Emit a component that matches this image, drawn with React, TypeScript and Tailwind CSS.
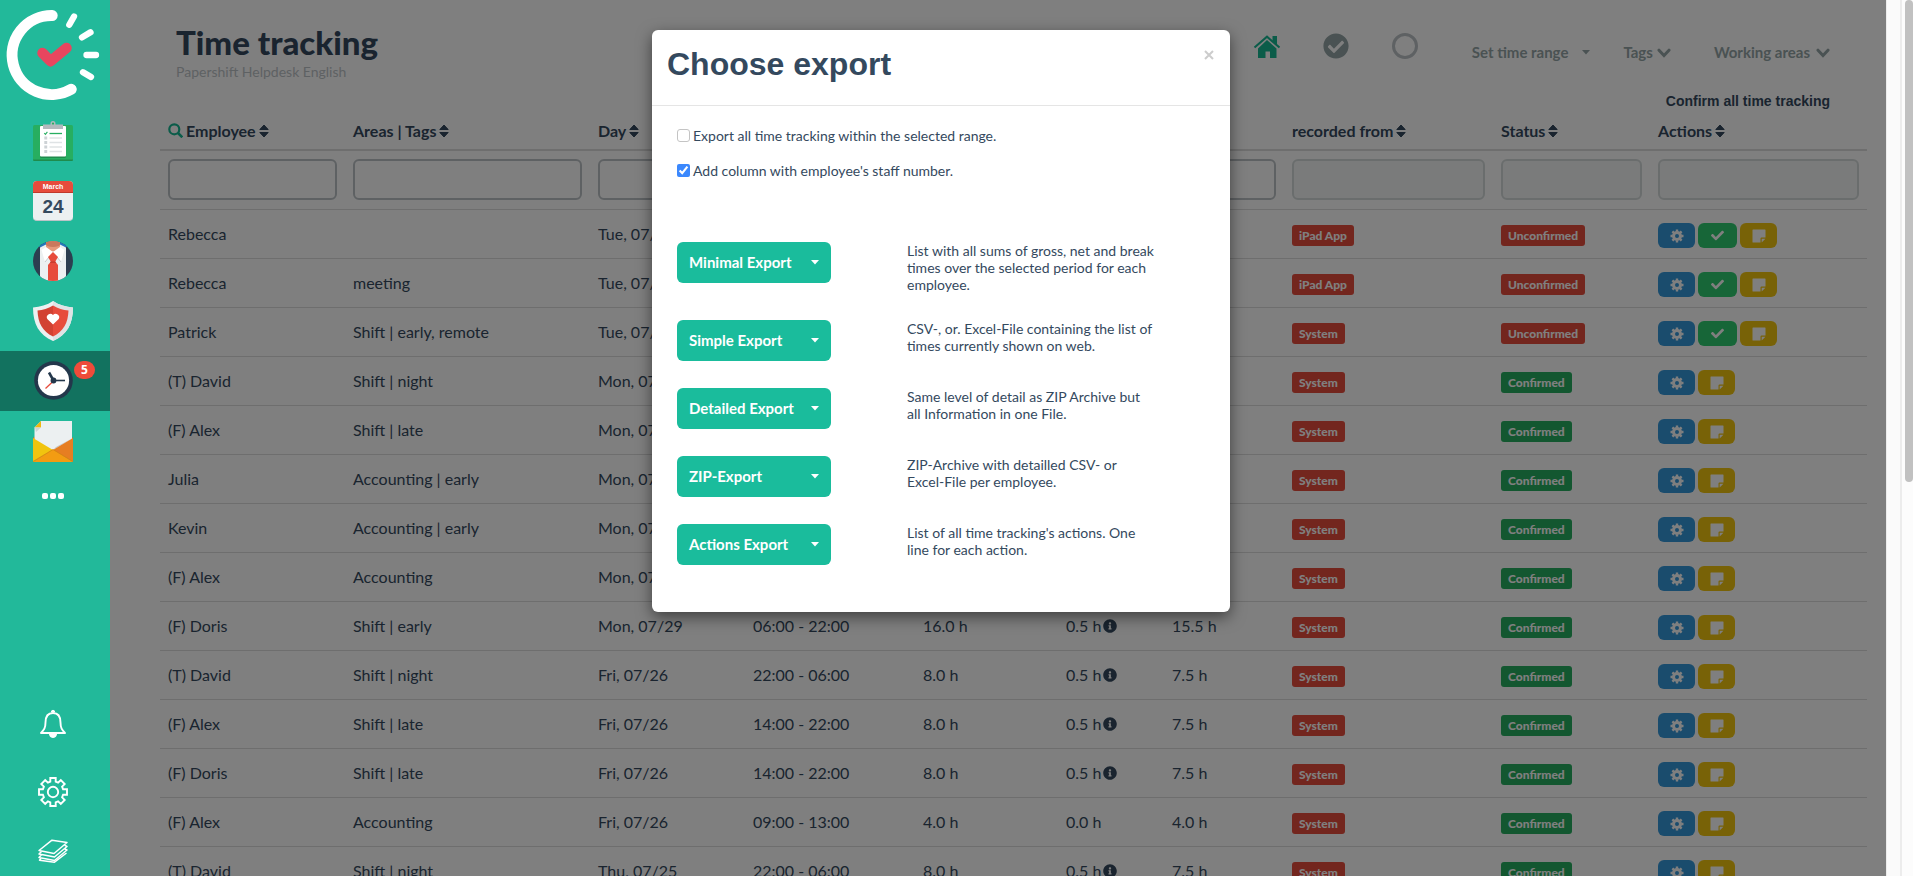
import React from 'react';
import { FaCheck, FaCheckCircle, FaInfoCircle } from 'react-icons/fa';

type Entry = {
  name: string;
  areas: string;
  day: string;
  time: string;
  gross: string;
  pause: string;
  net: string;
  source: string;
  confirmed: boolean;
};

const entries: Entry[] = [
  { name: 'Rebecca', areas: '', day: 'Tue, 07/30', time: '08:00 - 12:00', gross: '4.0 h', pause: '0.0 h', net: '4.0 h', source: 'iPad App', confirmed: false },
  { name: 'Rebecca', areas: 'meeting', day: 'Tue, 07/30', time: '13:00 - 17:00', gross: '4.0 h', pause: '0.0 h', net: '4.0 h', source: 'iPad App', confirmed: false },
  { name: 'Patrick', areas: 'Shift | early, remote', day: 'Tue, 07/30', time: '06:00 - 14:00', gross: '8.0 h', pause: '0.5 h', net: '7.5 h', source: 'System', confirmed: false },
  { name: '(T) David', areas: 'Shift | night', day: 'Mon, 07/29', time: '22:00 - 06:00', gross: '8.0 h', pause: '0.5 h', net: '7.5 h', source: 'System', confirmed: true },
  { name: '(F) Alex', areas: 'Shift | late', day: 'Mon, 07/29', time: '14:00 - 22:00', gross: '8.0 h', pause: '0.5 h', net: '7.5 h', source: 'System', confirmed: true },
  { name: 'Julia', areas: 'Accounting | early', day: 'Mon, 07/29', time: '06:00 - 14:00', gross: '8.0 h', pause: '0.5 h', net: '7.5 h', source: 'System', confirmed: true },
  { name: 'Kevin', areas: 'Accounting | early', day: 'Mon, 07/29', time: '06:00 - 14:00', gross: '8.0 h', pause: '0.5 h', net: '7.5 h', source: 'System', confirmed: true },
  { name: '(F) Alex', areas: 'Accounting', day: 'Mon, 07/29', time: '09:00 - 13:00', gross: '4.0 h', pause: '0.0 h', net: '4.0 h', source: 'System', confirmed: true },
  { name: '(F) Doris', areas: 'Shift | early', day: 'Mon, 07/29', time: '06:00 - 22:00', gross: '16.0 h', pause: '0.5 h', net: '15.5 h', source: 'System', confirmed: true },
  { name: '(T) David', areas: 'Shift | night', day: 'Fri, 07/26', time: '22:00 - 06:00', gross: '8.0 h', pause: '0.5 h', net: '7.5 h', source: 'System', confirmed: true },
  { name: '(F) Alex', areas: 'Shift | late', day: 'Fri, 07/26', time: '14:00 - 22:00', gross: '8.0 h', pause: '0.5 h', net: '7.5 h', source: 'System', confirmed: true },
  { name: '(F) Doris', areas: 'Shift | late', day: 'Fri, 07/26', time: '14:00 - 22:00', gross: '8.0 h', pause: '0.5 h', net: '7.5 h', source: 'System', confirmed: true },
  { name: '(F) Alex', areas: 'Accounting', day: 'Fri, 07/26', time: '09:00 - 13:00', gross: '4.0 h', pause: '0.0 h', net: '4.0 h', source: 'System', confirmed: true },
  { name: '(T) David', areas: 'Shift | night', day: 'Thu, 07/25', time: '22:00 - 06:00', gross: '8.0 h', pause: '0.5 h', net: '7.5 h', source: 'System', confirmed: true },
];

const columns = [
  { label: 'Employee', width: 'w-[185px]', disabled: false },
  { label: 'Areas | Tags', width: 'w-[245px]', disabled: false },
  { label: 'Day', width: 'w-[155px]', disabled: false },
  { label: 'Time', width: 'w-[170px]', disabled: false },
  { label: 'Gross', width: 'w-[143px]', disabled: false },
  { label: 'Break', width: 'w-[106px]', disabled: false },
  { label: 'Net', width: 'w-[120px]', disabled: false },
  { label: 'recorded from', width: 'w-[209px]', disabled: true },
  { label: 'Status', width: 'w-[157px]', disabled: true },
  { label: 'Actions', width: 'w-auto', disabled: true },
];

const exportsList = [
  { label: 'Minimal Export', text: 'List with all sums of gross, net and break times over the selected period for each employee.' },
  { label: 'Simple Export', text: 'CSV-, or. Excel-File containing the list of times currently shown on web.' },
  { label: 'Detailed Export', text: 'Same level of detail as ZIP Archive but all Information in one File.' },
  { label: 'ZIP-Export', text: 'ZIP-Archive with detailled CSV- or Excel-File per employee.' },
  { label: 'Actions Export', text: "List of all time tracking's actions. One line for each action." },
];

function Logo() {
  return (
    <svg width="110" height="110" viewBox="0 0 110 110" fill="none" strokeLinecap="round" aria-hidden="true">
      <path d="M52.200 15.500A39.500 39.500 0 1 0 71.200 89.300" stroke="#fff" strokeWidth="11" />
      <path d="M42.500 53L50.500 61.200L66.500 48" stroke="#e8465f" strokeWidth="10.500" strokeLinejoin="round" />
      <path d="M74 16.500L69.300 24.700M90.500 32.300L82 37.400M86.500 55H96M83 72.200L91 77" stroke="#fff" strokeWidth="6.300" />
    </svg>
  );
}

function ClipboardIcon() {
  return (
    <svg width="40" height="40" viewBox="0 0 40 40" aria-hidden="true">
      <rect y="4" width="40" height="36" rx="1.500" fill="#27ae60" />
      <path d="M0 38.500h40a1.500 1.500 0 0 1-1.500 1.500h-37A1.500 1.500 0 0 1 0 38.500z" fill="#1f8b4d" />
      <rect x="7" y="6" width="26" height="31" rx="1.500" fill="#1f8b4d" />
      <rect x="7" y="5" width="26" height="30.500" rx="1" fill="#fff" />
      <path d="M10 3.500h7.500V2.500a2.500 2.500 0 0 1 5 0v1H30V8H10z" fill="#b3b9bd" />
      <circle cx="20" cy="2.600" r="1.100" fill="#27ae60" />
      <path d="M11.200 12l1.200 1.300 2-2.400" stroke="#27ae60" strokeWidth="1.100" fill="none" />
      <path d="M16.500 12.500H29" stroke="#27ae60" strokeWidth="1.300" />
      <path d="M16.500 17H29M16.500 21.500H29M16.500 26H29M16.500 30.500H29" stroke="#dfe3e5" strokeWidth="1.300" />
      <path d="M11.300 17h2.900M11.300 21.500h2.900M11.300 26h2.900M11.300 30.500h2.900" stroke="#cdd2d5" strokeWidth="2.800" />
    </svg>
  );
}

function CalendarIcon() {
  return (
    <span className="flex h-10 w-10 flex-col overflow-hidden rounded-sm border-b border-[#bdc3c7] bg-[#ecf0f1] text-center">
      <span className="h-3 border-b border-[#c0392b] bg-[#e74c3c] font-['Liberation_Sans',sans-serif] text-[7px] leading-[11px] font-bold text-white">March</span>
      <span className="font-['Liberation_Sans',sans-serif] text-[19px] leading-[27px] font-bold text-[#34495e]">24</span>
    </span>
  );
}

function SuitIcon() {
  return (
    <svg width="40" height="40" viewBox="0 0 40 40" aria-hidden="true">
      <clipPath id="suit-clip"><circle cx="20" cy="20" r="20" /></clipPath>
      <g clipPath="url(#suit-clip)">
        <rect width="40" height="40" fill="#2c3e50" />
        <path d="M5 0h30v6H5z" fill="#2477bd" />
        <path d="M7 6.500L14 3h12l7 3.500V40H7z" fill="#ecf0f1" />
        <path d="M13 0h14v6.500a7 4 0 0 1-14 0z" fill="#e59a7c" />
        <path d="M13 0h14v3.500a7 2.500 0 0 1-14 0z" fill="#c9795d" />
        <path d="M13 6L20 11 12 21 8.500 9zM27 6L20 11 28 21 31.500 9z" fill="#fff" />
        <path d="M12 21l4-5M28 21l-4-5" stroke="#c5cbce" strokeWidth="1" />
        <path d="M20 11l5 5-3 5h-4l-3-5z" fill="#e74c3c" />
        <path d="M17.500 21h5l2.500 3v16H15V24z" fill="#e74c3c" />
        <path d="M17.500 20.500h5l.7 1.300h-6.400z" fill="#c0392b" />
      </g>
    </svg>
  );
}

function ShieldIcon() {
  return (
    <svg width="40" height="40" viewBox="0 0 40 40" aria-hidden="true">
      <path d="M20 0C14 4 7 6 0 6.500C0 23 6 34 20 40C34 34 40 23 40 6.500C33 6 26 4 20 0z" fill="#ecf0f1" />
      <path d="M20 0C26 4 33 6 40 6.500C40 23 34 34 20 40z" fill="#dfe3e5" />
      <path d="M20 4.500C15 7.500 10 9 4.500 9.500C5 22 9.500 30.500 20 35.500z" fill="#d24233" />
      <path d="M20 4.500C25 7.500 30 9 35.500 9.500C35 22 30.500 30.500 20 35.500z" fill="#e74c3c" />
      <path d="M20 23.500L14.300 18a3.500 3.500 0 0 1 5.700-4 3.500 3.500 0 0 1 5.700 4z" fill="#fff" />
    </svg>
  );
}

function ClockIcon() {
  return (
    <svg width="40" height="40" viewBox="0 0 40 40" aria-hidden="true">
      <circle cx="20.500" cy="19.500" r="19.300" fill="#23374b" />
      <circle cx="20.500" cy="19.500" r="15.600" fill="#fff" />
      <path d="M20.500 20L12.500 27.500" stroke="#e74c3c" strokeWidth="1.300" />
      <path d="M20.500 19.500H32" stroke="#23374b" strokeWidth="1.600" />
      <path d="M20.500 19.500L16 11.500" stroke="#23374b" strokeWidth="2.600" />
      <circle cx="20.500" cy="19.500" r="2.900" fill="#23374b" />
    </svg>
  );
}

function MailIcon() {
  return (
    <svg width="40" height="41" viewBox="0 0 40 41" aria-hidden="true">
      <path d="M0 17l3-2h34l3 2v8H0z" fill="#d56f12" />
      <path d="M1.500 6.500L8 0h31v29H1.500z" fill="#ecf0f1" />
      <path d="M1.500 6.500h6.500V0z" fill="#f1b80f" />
      <path d="M2 6.500h6L3 11z" fill="#cfd4d6" />
      <path d="M40 17L20 29l3-3z" fill="#bfc5c8" />
      <path d="M0 17L20 29 0 41z" fill="#f1c40f" />
      <path d="M40 17L20 29 40 41z" fill="#e67e22" />
      <path d="M0 41L20 28.500 40 41z" fill="#f39c12" />
      <path d="M0 40.500L20 28.500 40 40.500" stroke="#d9820f" strokeWidth=".8" fill="none" />
    </svg>
  );
}

function BellIcon() {
  return (
    <svg width="30" height="30" viewBox="0 0 30 30" fill="none" stroke="#fff" strokeWidth="1.900" strokeLinejoin="round" aria-hidden="true">
      <path d="M3 24C6 21 7.500 19 7.500 13.500C7.500 7 10.500 4 15 4S22.500 7 22.500 13.500C22.500 19 24 21 27 24z" />
      <path d="M13.300 3a1.700 1.700 0 0 1 3.400 0z" fill="#fff" strokeWidth="1" />
      <path d="M11.500 25a3.500 3.500 0 0 0 7 0z" fill="#fff" strokeWidth="1" />
    </svg>
  );
}

function GearOutlineIcon() {
  return (
    <svg width="30" height="30" viewBox="0 0 30 30" fill="none" stroke="#fff" strokeWidth="1.900" aria-hidden="true">
      <path d="M12.300 1h5.400v3.700l2.400 1 2.700-2.600 3.900 3.900-2.600 2.700 1 2.600H29v5.400h-3.900l-1 2.600 2.600 2.700-3.900 3.900-2.700-2.600-2.400 1V29h-5.400v-3.700l-2.400-1-2.700 2.600-3.900-3.900 2.600-2.700-1-2.600H1v-5.400h3.900l1-2.600L3.300 7l3.900-3.900 2.700 2.600 2.400-1z" />
      <circle cx="15" cy="15" r="5.200" />
    </svg>
  );
}

function LayersIcon() {
  return (
    <svg width="30" height="24" viewBox="0 0 30 24" fill="none" stroke="#fff" strokeWidth="1.500" strokeLinejoin="round" aria-hidden="true">
      <path d="M14 1.200L29 3.500 16 14.500 1 11.500z" />
      <path d="M3.500 12.500L1 15l15.500 3L29 7.500l-2.500-1.300M3.500 15.800L1 18.500l15.500 3L29 11l-2.500-1.200" />
      <path d="M3 19.200L1.500 21.200l15 2L28.500 14" />
    </svg>
  );
}

function HomeIcon() {
  return (
    <svg width="28" height="24" viewBox="0 0 28 24" aria-hidden="true">
      <path d="M14 6L23.500 14.500V24H17v-6.500h-4.500V24H5V14.500z" fill="#16b893" />
      <path d="M1.500 13.500L14 2.700 26.500 13.500" stroke="#16b893" strokeWidth="2.100" fill="none" />
      <path d="M19.500 2H24v9l-4.500-4z" fill="#16b893" />
    </svg>
  );
}

function SearchIcon() {
  return (
    <svg width="15" height="15" viewBox="0 0 15 15" fill="none" stroke="#16b893" aria-hidden="true">
      <circle cx="6.300" cy="6.300" r="5" strokeWidth="2.200" />
      <path d="M10 10l4.300 4.300" strokeWidth="2.600" />
    </svg>
  );
}

function SortIcon() {
  return (
    <svg width="10" height="14" viewBox="0 0 10 14" fill="#34495e" stroke="#34495e" strokeWidth="1" strokeLinejoin="round" aria-hidden="true">
      <path d="M5 1L9.200 5.500H.8zM5 13L.8 8.500h8.400z" />
    </svg>
  );
}

function Chevron() {
  return (
    <svg width="14" height="10" viewBox="0 0 14 10" fill="none" stroke="#95a5a6" strokeWidth="3" strokeLinecap="round" aria-hidden="true">
      <path d="M2 2.200L7 7.500 12 2.200" />
    </svg>
  );
}

function Caret({ className }: { className: string }) {
  return (
    <svg width="8" height="5" viewBox="0 0 8 5" className={className} aria-hidden="true">
      <path d="M0 0h8L4 4.500z" />
    </svg>
  );
}

function CogIcon() {
  return (
    <svg width="14" height="14" viewBox="0 0 14 14" fill="none" stroke="#fff" aria-hidden="true">
      <circle cx="7" cy="7" r="3.500" strokeWidth="3" />
      <path d="M7 .5v2M7 11.500v2M.5 7h2M11.500 7h2M2.400 2.400l1.500 1.500M10.100 10.100l1.500 1.500M11.600 2.400l-1.500 1.500M3.900 10.100l-1.500 1.500" strokeWidth="2.400" />
    </svg>
  );
}

function NoteIcon() {
  return (
    <svg width="14" height="14" viewBox="0 0 14 14" fill="#fff" aria-hidden="true">
      <path d="M1 .5h12a.5.5 0 0 1 .5.500V8.500H9.500a1 1 0 0 0-1 1v4H1a.5.5 0 0 1-.5-.5V1A.5.5 0 0 1 1 .5z" />
      <path d="M9.700 9.700h3.700l-3.700 3.700z" />
    </svg>
  );
}

function SideLink({ label, active = false, children }: { label: string; active?: boolean; children: React.ReactNode }) {
  return (
    <a href="#" aria-label={label} className={`flex h-[60px] items-center pl-[33px] ${active ? 'relative bg-[#12725f]' : ''}`}>
      {children}
    </a>
  );
}

function Sidebar() {
  return (
    <nav className="flex w-[110px] shrink-0 flex-col bg-[#22b99a]">
      <a href="#" aria-label="Home" className="h-[111px]"><Logo /></a>
      <SideLink label="Plans"><ClipboardIcon /></SideLink>
      <SideLink label="Calendar"><CalendarIcon /></SideLink>
      <SideLink label="Employees"><SuitIcon /></SideLink>
      <SideLink label="Absences"><ShieldIcon /></SideLink>
      <SideLink label="Time tracking" active>
        <ClockIcon />
        <span className="absolute top-[10px] left-[74px] flex h-[18px] w-[21px] items-center justify-center rounded-full bg-[#ee4b3a] font-['Open_Sans',sans-serif] text-[12px] font-bold text-white">5</span>
      </SideLink>
      <SideLink label="Messages"><MailIcon /></SideLink>
      <a href="#" aria-label="More" className="flex h-[50px] items-center gap-[2px] pl-[42px]">
        <span className="h-[6px] w-[6px] rounded-[2px] bg-white" />
        <span className="h-[6px] w-[6px] rounded-[2px] bg-white" />
        <span className="h-[6px] w-[6px] rounded-[2px] bg-white" />
      </a>
      <div className="mt-auto flex flex-col items-center pr-1 pb-[13px]">
        <a href="#" aria-label="Notifications" className="mb-[38px]"><BellIcon /></a>
        <a href="#" aria-label="Settings" className="mb-8"><GearOutlineIcon /></a>
        <a href="#" aria-label="Documents"><LayersIcon /></a>
      </div>
    </nav>
  );
}

function TopBar() {
  return (
    <header className="flex h-[112px] justify-between pr-14 pl-[66px]">
      <div className="pt-[22px]">
        <h1 className="text-[33px] leading-10 font-black">Time tracking</h1>
        <p className="text-[14px] leading-5 text-[#bdc3c7]">Papershift Helpdesk English</p>
      </div>
      <div className="flex flex-col items-end">
        <div className="flex h-[92px] items-center text-[15px] font-bold text-[#95a5a6]">
          <a href="#" aria-label="Overview" className="mr-[42px]"><HomeIcon /></a>
          <button type="button" aria-label="Confirmed" className="mr-[43px]"><FaCheckCircle size={26} /></button>
          <button type="button" aria-label="Open" className="mr-[54px] h-[26px] w-[26px] rounded-full border-[3px] border-[#bdc3c7]" />
          <button type="button" className="mt-[13px] mr-[33px] flex items-center gap-[14px]">
            Set time range <Caret className="fill-[#95a5a6]" />
          </button>
          <button type="button" className="mt-[13px] mr-[43px] flex items-center gap-1">Tags <Chevron /></button>
          <button type="button" className="mt-[13px] flex items-center gap-[6px]">Working areas <Chevron /></button>
        </div>
        <a href="#" className="font-['Liberation_Sans',sans-serif] text-[14px] leading-[18px] font-bold">Confirm all time tracking</a>
      </div>
    </header>
  );
}

function Label({ red, children }: { red: boolean; children: React.ReactNode }) {
  return (
    <span className={`block w-fit rounded-[3px] px-[7px] text-[12px] leading-[21px] font-black text-white ${red ? 'bg-[#e74c3c]' : 'bg-[#27ae60]'}`}>
      {children}
    </span>
  );
}

function EntryRow({ entry }: { entry: Entry }) {
  return (
    <tr className="h-[49px] border-t border-[#dddddd]">
      <td className="px-2">{entry.name}</td>
      <td className="px-2">{entry.areas}</td>
      <td className="px-2">{entry.day}</td>
      <td className="px-2">{entry.time}</td>
      <td className="px-2">{entry.gross}</td>
      <td className="px-2">
        <span className="flex items-center gap-[2px]">
          {entry.pause}
          {entry.pause !== '0.0 h' && <FaInfoCircle size={14} />}
        </span>
      </td>
      <td className="px-2">{entry.net}</td>
      <td className="px-2 pt-1"><Label red>{entry.source}</Label></td>
      <td className="px-2 pt-1"><Label red={!entry.confirmed}>{entry.confirmed ? 'Confirmed' : 'Unconfirmed'}</Label></td>
      <td className="px-2 pt-1">
        <div className="flex gap-[3px] text-white">
          <button type="button" aria-label="Edit" className="flex h-[25px] w-[37px] items-center justify-center rounded-md bg-[#3498db]"><CogIcon /></button>
          {!entry.confirmed && (
            <button type="button" aria-label="Confirm" className="flex h-[25px] w-[39px] items-center justify-center rounded-md bg-[#2ecc71]"><FaCheck size={13} /></button>
          )}
          <button type="button" aria-label="Note" className="flex h-[25px] w-[37px] items-center justify-center rounded-md bg-[#f1c40f]"><NoteIcon /></button>
        </div>
      </td>
    </tr>
  );
}

function TrackingTable() {
  return (
    <div className="pr-[19px] pl-[50px]">
      <table className="w-full table-fixed border-collapse text-left text-[16px] whitespace-nowrap">
        <thead>
          <tr className="h-[38px]">
            {columns.map((column, index) => (
              <th key={column.label} scope="col" className={`px-2 font-bold ${column.width}`}>
                <span className="flex items-center gap-[3px]">
                  {index === 0 && <SearchIcon />}
                  {column.label}
                  <SortIcon />
                </span>
              </th>
            ))}
          </tr>
        </thead>
        <tbody>
          <tr className="h-[59px] border-t-2 border-[#dddddd]">
            {columns.map((column) => (
              <td key={column.label} className="px-2">
                <input
                  type="text"
                  aria-label={`Filter ${column.label}`}
                  disabled={column.disabled}
                  className="block h-[41px] w-full rounded-md border-2 border-[#bdc3c7] bg-white px-2 disabled:border-[#d5dbdb] disabled:bg-[#f4f6f6]"
                />
              </td>
            ))}
          </tr>
          {entries.map((entry, index) => <EntryRow key={index} entry={entry} />)}
        </tbody>
      </table>
    </div>
  );
}

function ExportDialog() {
  return (
    <div className="absolute inset-0 flex items-start justify-center pt-[30px] pr-[31px]">
      <section role="dialog" aria-modal="true" aria-labelledby="export-title" className="w-[578px] rounded-md bg-white pb-[47px] shadow-[0_5px_15px_rgba(0,0,0,0.5)]">
        <div className="flex h-[76px] items-start justify-between border-b border-[#e5e5e5] px-[15px] pt-[14px]">
          <h2 id="export-title" className="font-['Liberation_Sans',sans-serif] text-[32px] leading-10 font-bold">Choose export</h2>
          <button type="button" aria-label="Close" className="flex h-[22px] w-3 items-center justify-center">
            <svg width="10" height="10" viewBox="0 0 10 10" stroke="#cccccc" strokeWidth="2" aria-hidden="true"><path d="M1 1l8 8M9 1L1 9" /></svg>
          </button>
        </div>
        <div className="px-[25px] pt-[19px] text-[14px]">
          <label className="flex h-[21px] items-center gap-[3px]">
            <input type="checkbox" className="h-[13px] w-[13px] appearance-none rounded-[3px] border border-[#c4c4c4] bg-white" />
            Export all time tracking within the selected range.
          </label>
          <label className="mt-[14px] flex h-[21px] items-center gap-[3px]">
            <input type="checkbox" defaultChecked className="h-[13px] w-[13px] accent-[#3b88fd]" />
            Add column with employee's staff number.
          </label>
          <div className="mt-[61px] flex flex-col gap-[27px]">
            {exportsList.map((item) => (
              <div key={item.label} className="flex items-start gap-[76px]">
                <button type="button" className="flex h-[41px] w-[154px] shrink-0 items-center justify-between rounded-md bg-[#1abc9c] pr-3 pl-3 text-[15px] font-bold text-white">
                  {item.label}
                  <Caret className="fill-white" />
                </button>
                <p className="w-[250px] leading-[17px]">{item.text}</p>
              </div>
            ))}
          </div>
        </div>
      </section>
    </div>
  );
}

export default function App() {
  return (
    <div className="relative flex h-screen overflow-hidden bg-white font-['Lato',sans-serif] text-[#34495e]">
      <Sidebar />
      <main className="relative min-w-0 flex-1 overflow-hidden">
        <TopBar />
        <TrackingTable />
        <div className="absolute inset-0 bg-black/50" />
      </main>
      <div className="w-4 shrink-0 border-r-2 border-l border-[#ececec] bg-[#fafafa]" />
      <div className="w-[11px] shrink-0 bg-[#fcfcfc] pl-[3px]">
        <div className="h-[55%] rounded-full bg-[#c1c1c1]" />
      </div>
      <ExportDialog />
    </div>
  );
}
